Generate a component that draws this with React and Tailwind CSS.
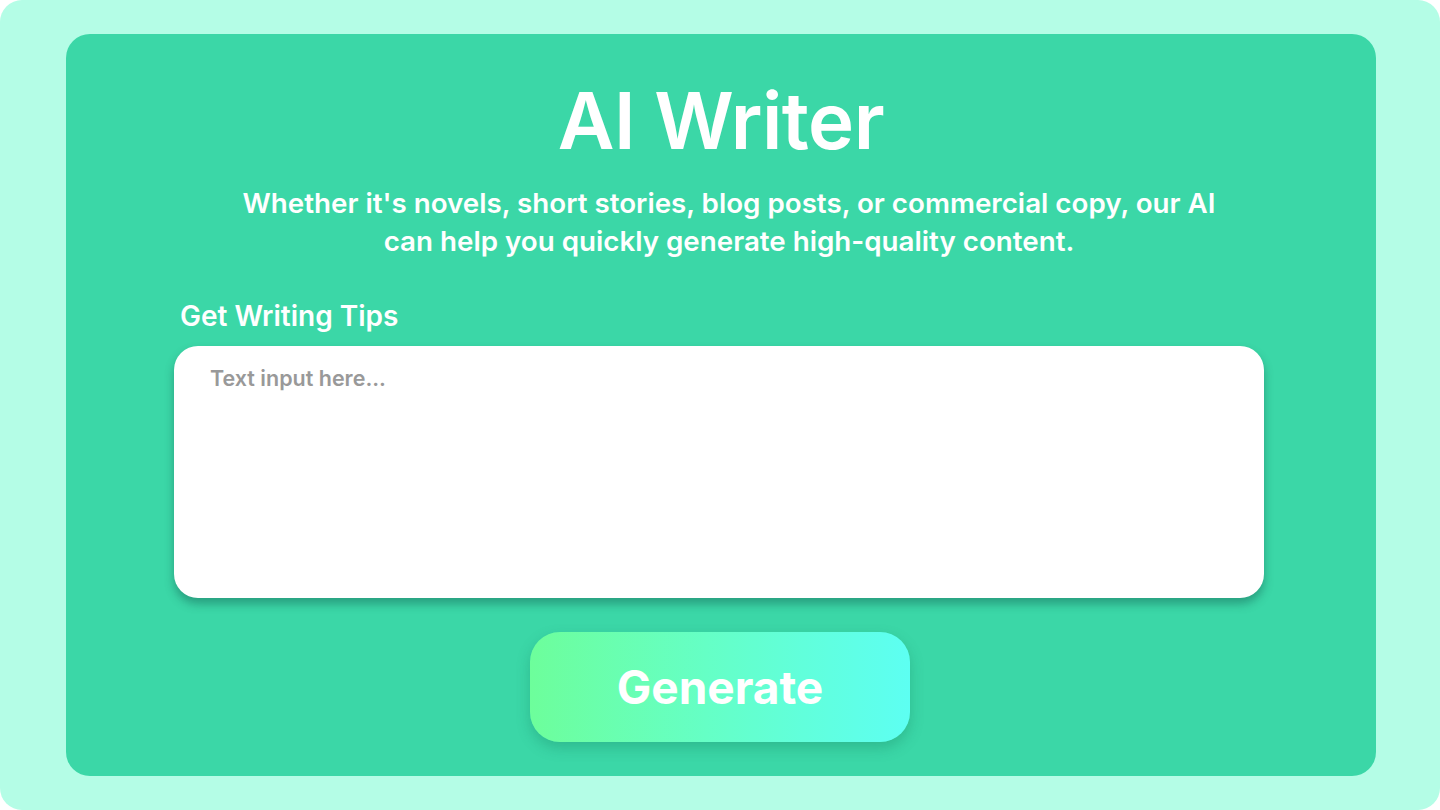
import React from "react";

export default function App() {
  return (
    <div className="w-[1440px] h-[810px] bg-white" style={{ fontFamily: "Inter, 'Noto Sans', sans-serif" }}>
      <div className="w-full h-full rounded-[22px] bg-[#b4fde6] pl-[66px] pr-[64px] py-[34px]">
        <div className="w-full h-full rounded-[24px] bg-[#3bd7a7] flex flex-col items-center pt-[48px]">
          <h1 className="text-white font-semibold text-[78px] leading-[78px] tracking-[-0.5px]">AI Writer</h1>
          <p className="mt-[24px] ml-[16px] w-[990px] text-center text-white font-semibold text-[27.75px] leading-[38px]">
            Whether it's novels, short stories, blog posts, or commercial copy, our AI can help you quickly generate high-quality content.
          </p>
          <div className="mt-[40px] ml-[-4px] w-[1090px] flex flex-col">
            <label className="pl-[6px] text-white font-semibold text-[28px] leading-[32px]">Get Writing Tips</label>
            <textarea
              placeholder="Text input here..."
              className="mt-[14px] w-full h-[252px] rounded-[24px] bg-white shadow-[0_6px_10px_rgba(20,90,80,0.45)] px-[36px] py-[17px] text-[21.5px] leading-[30px] font-semibold text-gray-700 placeholder:text-[#999999] resize-none outline-none"
            />
          </div>
          <button className="mt-[34px] ml-[-2px] w-[380px] h-[110px] rounded-[30px] bg-gradient-to-r from-[#6dfe9b] to-[#5dfff2] shadow-[0_6px_14px_rgba(20,120,90,0.3)] text-white font-bold text-[46px]">
            Generate
          </button>
        </div>
      </div>
    </div>
  );
}
